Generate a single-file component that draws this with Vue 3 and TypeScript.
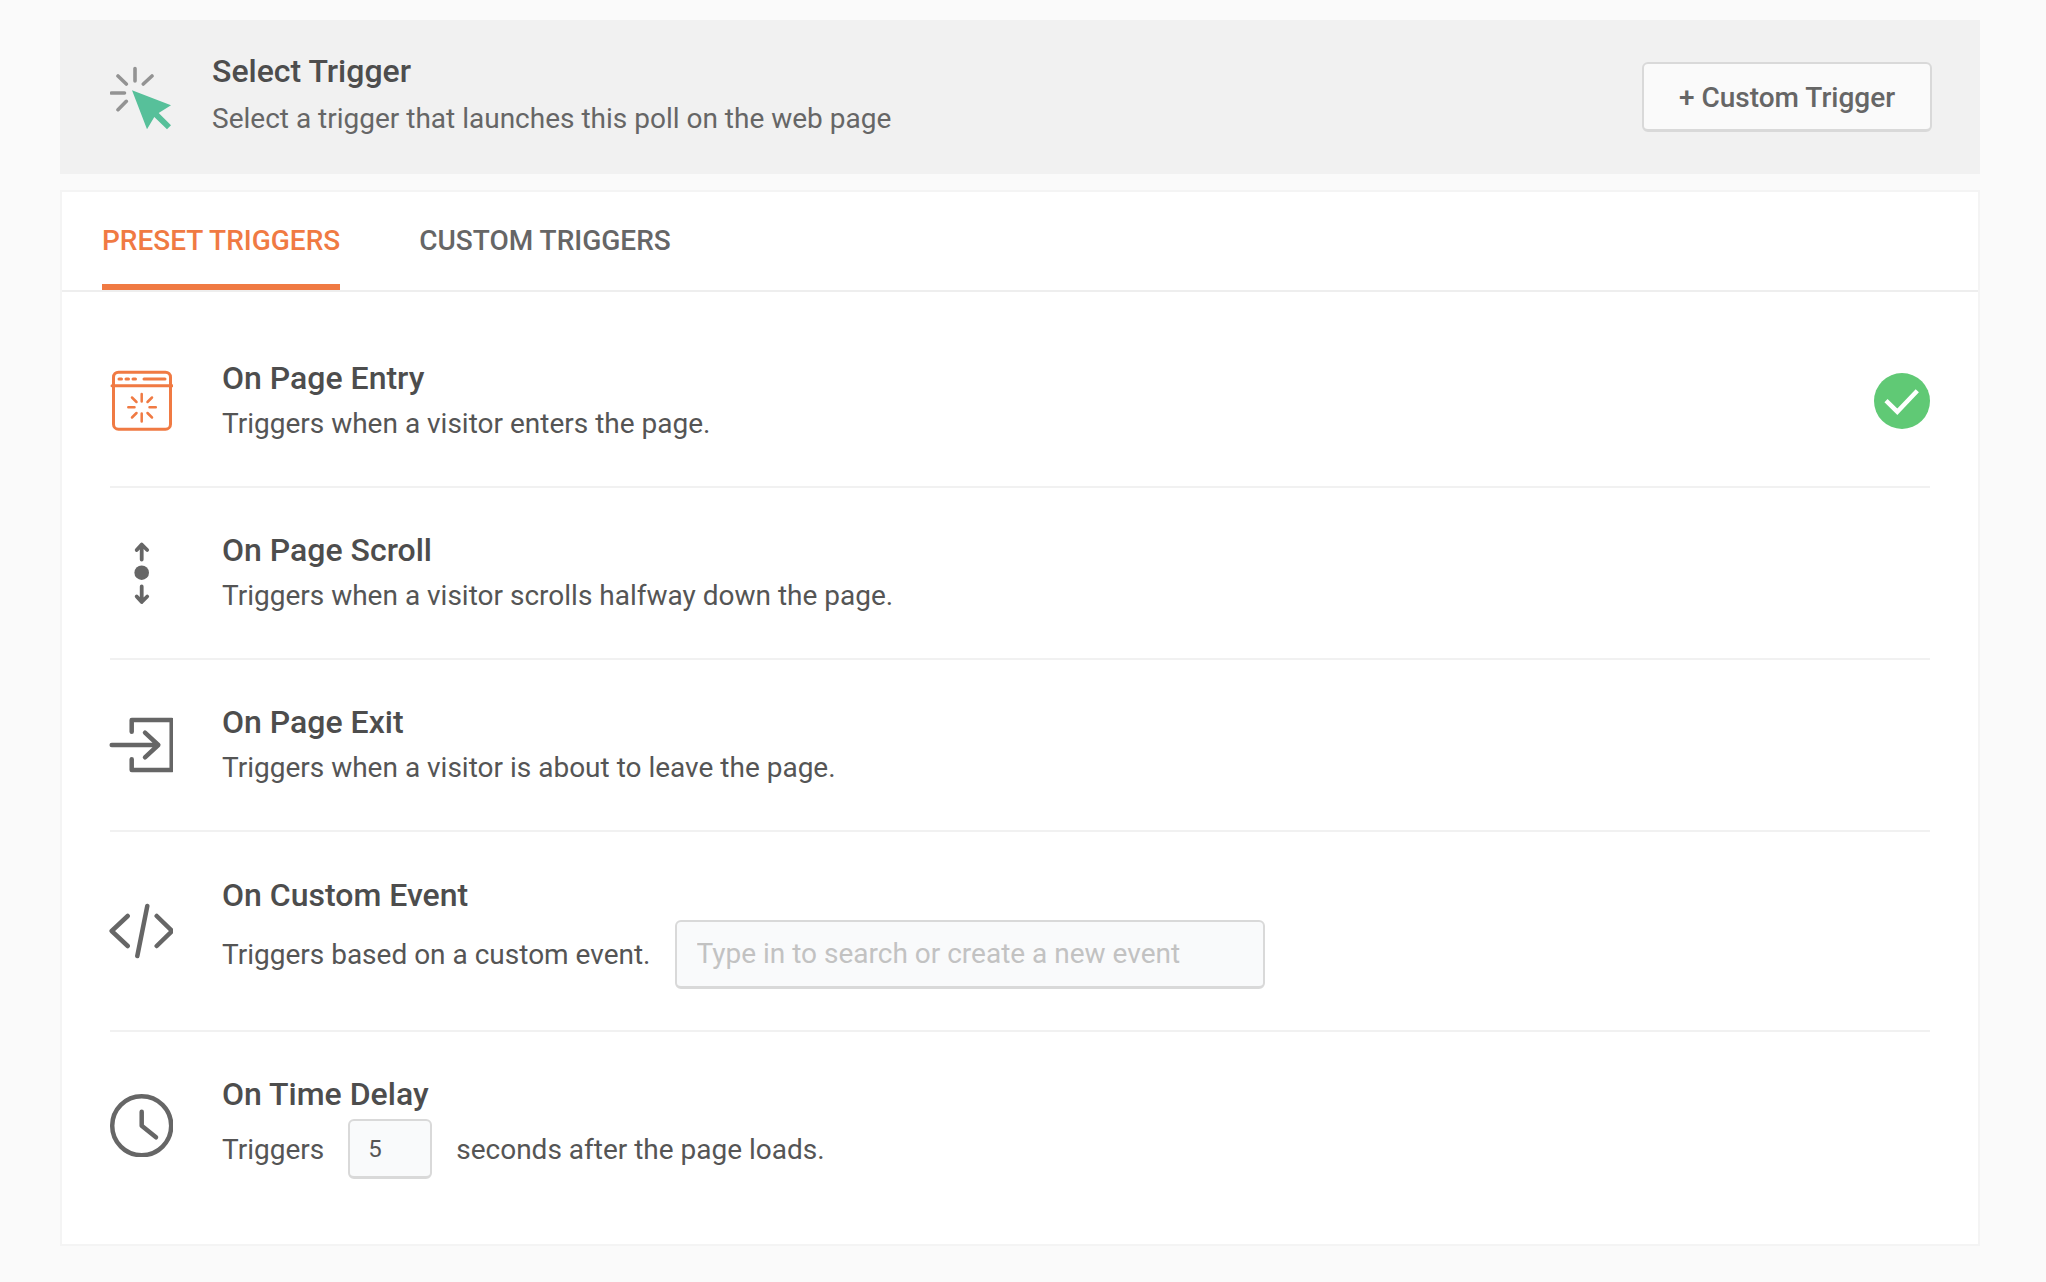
<script setup lang="ts">
const page = 'Select Trigger'
</script>

<template>
  <div class="page">
    <header class="head">
      <svg class="head-icon" width="64" height="64" viewBox="0 0 64 64" fill="none">
        <g stroke="#939393" stroke-width="3.6" stroke-linecap="round">
          <path d="M25 2.500V15M8 10l8.300 8M42 10l-8.700 8M1.500 27H14.500M16.300 35.300 8 43.700" />
        </g>
        <path d="M22 24.300 61 39.300 48.700 47 61 59.300 57 63.300 44.300 51 37 63.300Z" fill="#57c09a" />
      </svg>
      <div class="head-text">
        <h1>{{ page }}</h1>
        <p>Select a trigger that launches this poll on the web page</p>
      </div>
      <button class="btn" type="button">+ Custom Trigger</button>
    </header>

    <section class="card">
      <nav class="tabs">
        <a class="tab active">PRESET TRIGGERS</a>
        <a class="tab">CUSTOM TRIGGERS</a>
      </nav>

      <div class="list">
        <div class="row">
          <svg class="icon" width="64" height="64" viewBox="0 0 64 64" fill="none" stroke="#f07a43" stroke-width="3" stroke-linecap="round">
            <rect x="4.500" y="3.200" width="57" height="57" rx="5" />
            <path d="M3 16.700H63" />
            <path d="M10 10h2.500M17 10h2.500M24 10h2.500M35 10H56" />
            <path stroke-width="2.500" d="M32.700 25V32.500M32.700 44.500V52.500M19.300 38.300H25.500M40.500 38.300H46.800M23 28.500l4.500 4.500M43 28.500l-4.500 4.500M23 48.500l4.500-4.500M43 48.500l-4.500-4.500" />
          </svg>
          <div class="text">
            <h2>On Page Entry</h2>
            <p>Triggers when a visitor enters the page.</p>
          </div>
          <svg class="check" width="56" height="56" viewBox="0 0 56 56" fill="none">
            <circle cx="28" cy="28" r="28" fill="#60c975" />
            <path d="M12 27.700 23.300 38.700 43.300 17.700" stroke="#fff" stroke-width="4.500" />
          </svg>
        </div>

        <div class="row">
          <svg class="icon" width="64" height="64" viewBox="0 0 64 64" fill="none" stroke="#666" stroke-width="3.800" stroke-linecap="round" stroke-linejoin="round">
            <path d="M32.700 18.500V4M27.700 9l5-5.500 5.500 5.500" />
            <circle cx="32.700" cy="31.700" r="7.300" fill="#666" stroke="none" />
            <path d="M32.700 45.500V60M27.700 55.500l5 5.500 5.500-5.500" />
          </svg>
          <div class="text">
            <h2>On Page Scroll</h2>
            <p>Triggers when a visitor scrolls halfway down the page.</p>
          </div>
        </div>

        <div class="row">
          <svg class="icon" width="64" height="64" viewBox="0 0 64 64" fill="none" stroke="#666" stroke-width="4.500" stroke-linecap="round" stroke-linejoin="round">
            <path d="M22.700 18.700V7H62.700V57H22.700V46.300" />
            <path d="M2.700 32H49.300M36 19.700 49.300 32 36 44.300" />
          </svg>
          <div class="text">
            <h2>On Page Exit</h2>
            <p>Triggers when a visitor is about to leave the page.</p>
          </div>
        </div>

        <div class="row tall">
          <svg class="icon" width="64" height="64" viewBox="0 0 64 64" fill="none" stroke="#666" stroke-width="4.500" stroke-linecap="round" stroke-linejoin="round">
            <path d="M18.700 17 2.700 32 18.700 47M47.700 17 63 32 47.700 47M38.300 7 28.300 57" />
          </svg>
          <div class="text event-text">
            <h2>On Custom Event</h2>
            <div class="line event">
              <span>Triggers based on a custom event.</span>
              <input class="field wide" type="text" placeholder="Type in to search or create a new event" />
            </div>
          </div>
        </div>

        <div class="row last">
          <svg class="icon" width="64" height="64" viewBox="0 0 64 64" fill="none" stroke="#666" stroke-width="4.500" stroke-linecap="round" stroke-linejoin="round">
            <circle cx="32.700" cy="32.700" r="29.500" />
            <path d="M32.700 18.700V32.700L47 44.300" />
          </svg>
          <div class="text delay-text">
            <h2>On Time Delay</h2>
            <div class="line delay">
              <span>Triggers</span>
              <input class="field small" type="text" value="5" />
              <span>seconds after the page loads.</span>
            </div>
          </div>
        </div>
      </div>
    </section>
  </div>
</template>

<style scoped>
.page {
  box-sizing: border-box;
  min-height: 1282px;
  padding: 20px 66px 35px 60px;
  font-family: Roboto, "Liberation Sans", sans-serif;
  color: #666;
}
.head {
  display: flex;
  align-items: center;
  height: 154px;
  padding: 0 48px 0 50px;
  background: #f1f1f1;
}
.head-icon {
  flex: none;
  margin-right: 38px;
  margin-top: 1px;
}
.head-text {
  flex: 1;
  padding-bottom: 5px;
}
h1 {
  margin: 0 0 13px;
  font-size: 32px;
  line-height: 36px;
  font-weight: 500;
  color: #4d4d4d;
}
.head-text p {
  margin: 0;
  font-size: 28px;
  line-height: 34px;
  color: #666;
}
.btn {
  box-sizing: border-box;
  width: 290px;
  height: 70px;
  padding: 2px 0 0;
  border: 2px solid #d9d9d9;
  border-bottom-width: 3px;
  border-radius: 6px;
  background: #fafafa;
  font-family: inherit;
  font-size: 28px;
  font-weight: 500;
  color: #666;
}
.card {
  margin-top: 16px;
  background: #fff;
  border: 2px solid #f4f4f4;
}
.tabs {
  display: flex;
  gap: 79px;
  height: 98px;
  padding-left: 40px;
  border-bottom: 2px solid #eee;
}
.tab {
  box-sizing: border-box;
  height: 98px;
  padding-top: 32px;
  font-size: 28px;
  line-height: 34px;
  font-weight: 500;
  color: #666;
}
.tab.active {
  color: #f07a43;
  border-bottom: 6px solid #f07a43;
}
.list {
  padding: 24px 48px 26px 48px;
}
.row {
  display: flex;
  align-items: center;
  height: 170px;
  border-bottom: 2px solid #f1f1f1;
}
.row.tall {
  height: 198px;
}
.row.last {
  height: 186px;
  border-bottom: 0;
}
.icon {
  flex: none;
  margin-left: -1px;
  margin-right: 49px;
}
.text {
  flex: 1;
}
.event-text {
  padding-top: 3px;
}
.delay-text {
  padding-top: 5px;
}
h2 {
  margin: 0;
  font-size: 32px;
  line-height: 36px;
  font-weight: 500;
  color: #4d4d4d;
}
.text p {
  margin: 10px 0 0;
  font-size: 28px;
  line-height: 36px;
  color: #555;
}
.line {
  display: flex;
  align-items: center;
  font-size: 28px;
  color: #555;
}
.event {
  gap: 24px;
  margin-top: 7px;
}
.delay {
  gap: 24px;
  margin-top: 7px;
}
.field {
  box-sizing: border-box;
  border: 2px solid #d9d9d9;
  border-bottom-width: 3px;
  border-radius: 6px;
  background: #f9fafb;
  font-family: inherit;
  outline: none;
}
.wide {
  width: 590px;
  height: 69px;
  padding: 0 20px;
  font-size: 28px;
}
.wide::placeholder {
  color: #c2c2c2;
}
.small {
  width: 84px;
  height: 60px;
  padding: 0 18px;
  font-size: 24px;
  color: #555;
}
.check {
  flex: none;
}
</style>

<style>
html,
body {
  background: #fafafa;
}
</style>
